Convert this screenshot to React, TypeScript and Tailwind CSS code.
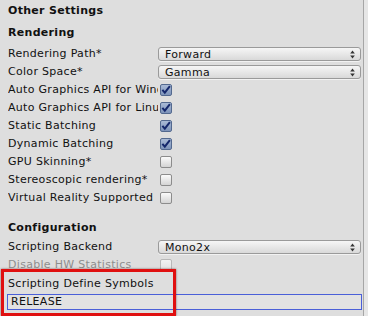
import React from "react";

const Arrows = () => (
  <svg width="5" height="9" viewBox="0 0 5 9" className="shrink-0">
    <path d="M2.5 0.5 L4.8 3.5 L0.2 3.5 Z" fill="#333" />
    <path d="M2.5 8.5 L4.8 5.5 L0.2 5.5 Z" fill="#333" />
  </svg>
);

const Dropdown = ({ value }: { value: string }) => (
  <div className="flex h-[14px] w-[203px] items-center justify-between rounded-[3px] border border-[#9a9a9a] bg-gradient-to-b from-[#f6f6f6] to-[#d9d9d9] pl-[6px] pr-[5px] shadow-[0_1px_0_rgba(255,255,255,0.6)]">
    <span className="leading-none">{value}</span>
    <Arrows />
  </div>
);

const Check = ({ checked, disabled }: { checked?: boolean; disabled?: boolean }) =>
  checked ? (
    <div className="ml-[2px] flex h-[12px] w-[12px] items-center justify-center rounded-[2px] border border-[#53698f] bg-gradient-to-b from-[#a9bad6] to-[#7d93b9]">
      <svg width="11" height="10" viewBox="0 0 11 10">
        <path d="M1.5 4.8 L4.2 8 L9.8 0.8" stroke="#14276b" strokeWidth="2.2" fill="none" />
      </svg>
    </div>
  ) : (
    <div
      className={
        disabled
          ? "ml-[2px] h-[12px] w-[12px] rounded-[2px] border border-[#b8b8b8] bg-gradient-to-b from-[#f2f2f2] to-[#e2e2e2]"
          : "ml-[2px] h-[12px] w-[12px] rounded-[2px] border border-[#8c8c8c] bg-gradient-to-b from-[#fbfbfb] to-[#d4d4d4]"
      }
    />
  );

const Row = ({ label, children, dim }: { label: string; children?: React.ReactNode; dim?: boolean }) => (
  <div className="flex h-[18px] items-center">
    <div className={"w-[150px] shrink-0 overflow-hidden whitespace-nowrap " + (dim ? "text-[#8e8e8e]" : "")}>{label}</div>
    {children}
  </div>
);

export default function App() {
  return (
    <div
      className="relative flex h-[316px] w-[368px] overflow-hidden bg-[#dedede] text-[11px] tracking-[0.3px] text-[#111]"
      style={{ fontFamily: '"DejaVu Sans", Verdana, sans-serif' }}
    >
      <div className="flex w-[364px] shrink-0 flex-col border-r border-[#a6a6a6] pl-[8px]">
        <div className="flex h-[22px] items-center pt-[1px] font-bold">Other Settings</div>
        <div className="flex h-[22px] items-center pt-[1px] font-bold">Rendering</div>
        <div className="mt-[1px]">
          <Row label="Rendering Path*">
            <Dropdown value="Forward" />
          </Row>
          <Row label="Color Space*">
            <Dropdown value="Gamma" />
          </Row>
          <Row label="Auto Graphics API for Windows">
            <Check checked />
          </Row>
          <Row label="Auto Graphics API for Linux">
            <Check checked />
          </Row>
          <Row label="Static Batching">
            <Check checked />
          </Row>
          <Row label="Dynamic Batching">
            <Check checked />
          </Row>
          <Row label="GPU Skinning*">
            <Check />
          </Row>
          <Row label="Stereoscopic rendering*">
            <Check />
          </Row>
          <Row label="Virtual Reality Supported">
            <Check />
          </Row>
        </div>
        <div className="mt-[12px] flex h-[18px] items-center font-bold">Configuration</div>
        <div className="mt-[1px]">
          <Row label="Scripting Backend">
            <Dropdown value="Mono2x" />
          </Row>
          <Row label="Disable HW Statistics" dim>
            <Check disabled />
          </Row>
        </div>
        <div className="mt-[1px]">
          <Row label="Scripting Define Symbols" />
        </div>
        <div className="mt-[1px] -ml-[1px] flex h-[16px] w-[355px] items-center border border-[#4a5fd8] bg-[#e2e2e2] pl-[3px]">
          RELEASE
        </div>
      </div>
      <div className="flex-1 bg-[#e6e6e6]" />
      <div className="pointer-events-none absolute left-[1px] top-[269px] h-[47px] w-[175px] border-[3.5px] border-[#e01010] shadow-[0_0_2px_rgba(60,0,0,0.6)]" />
    </div>
  );
}
